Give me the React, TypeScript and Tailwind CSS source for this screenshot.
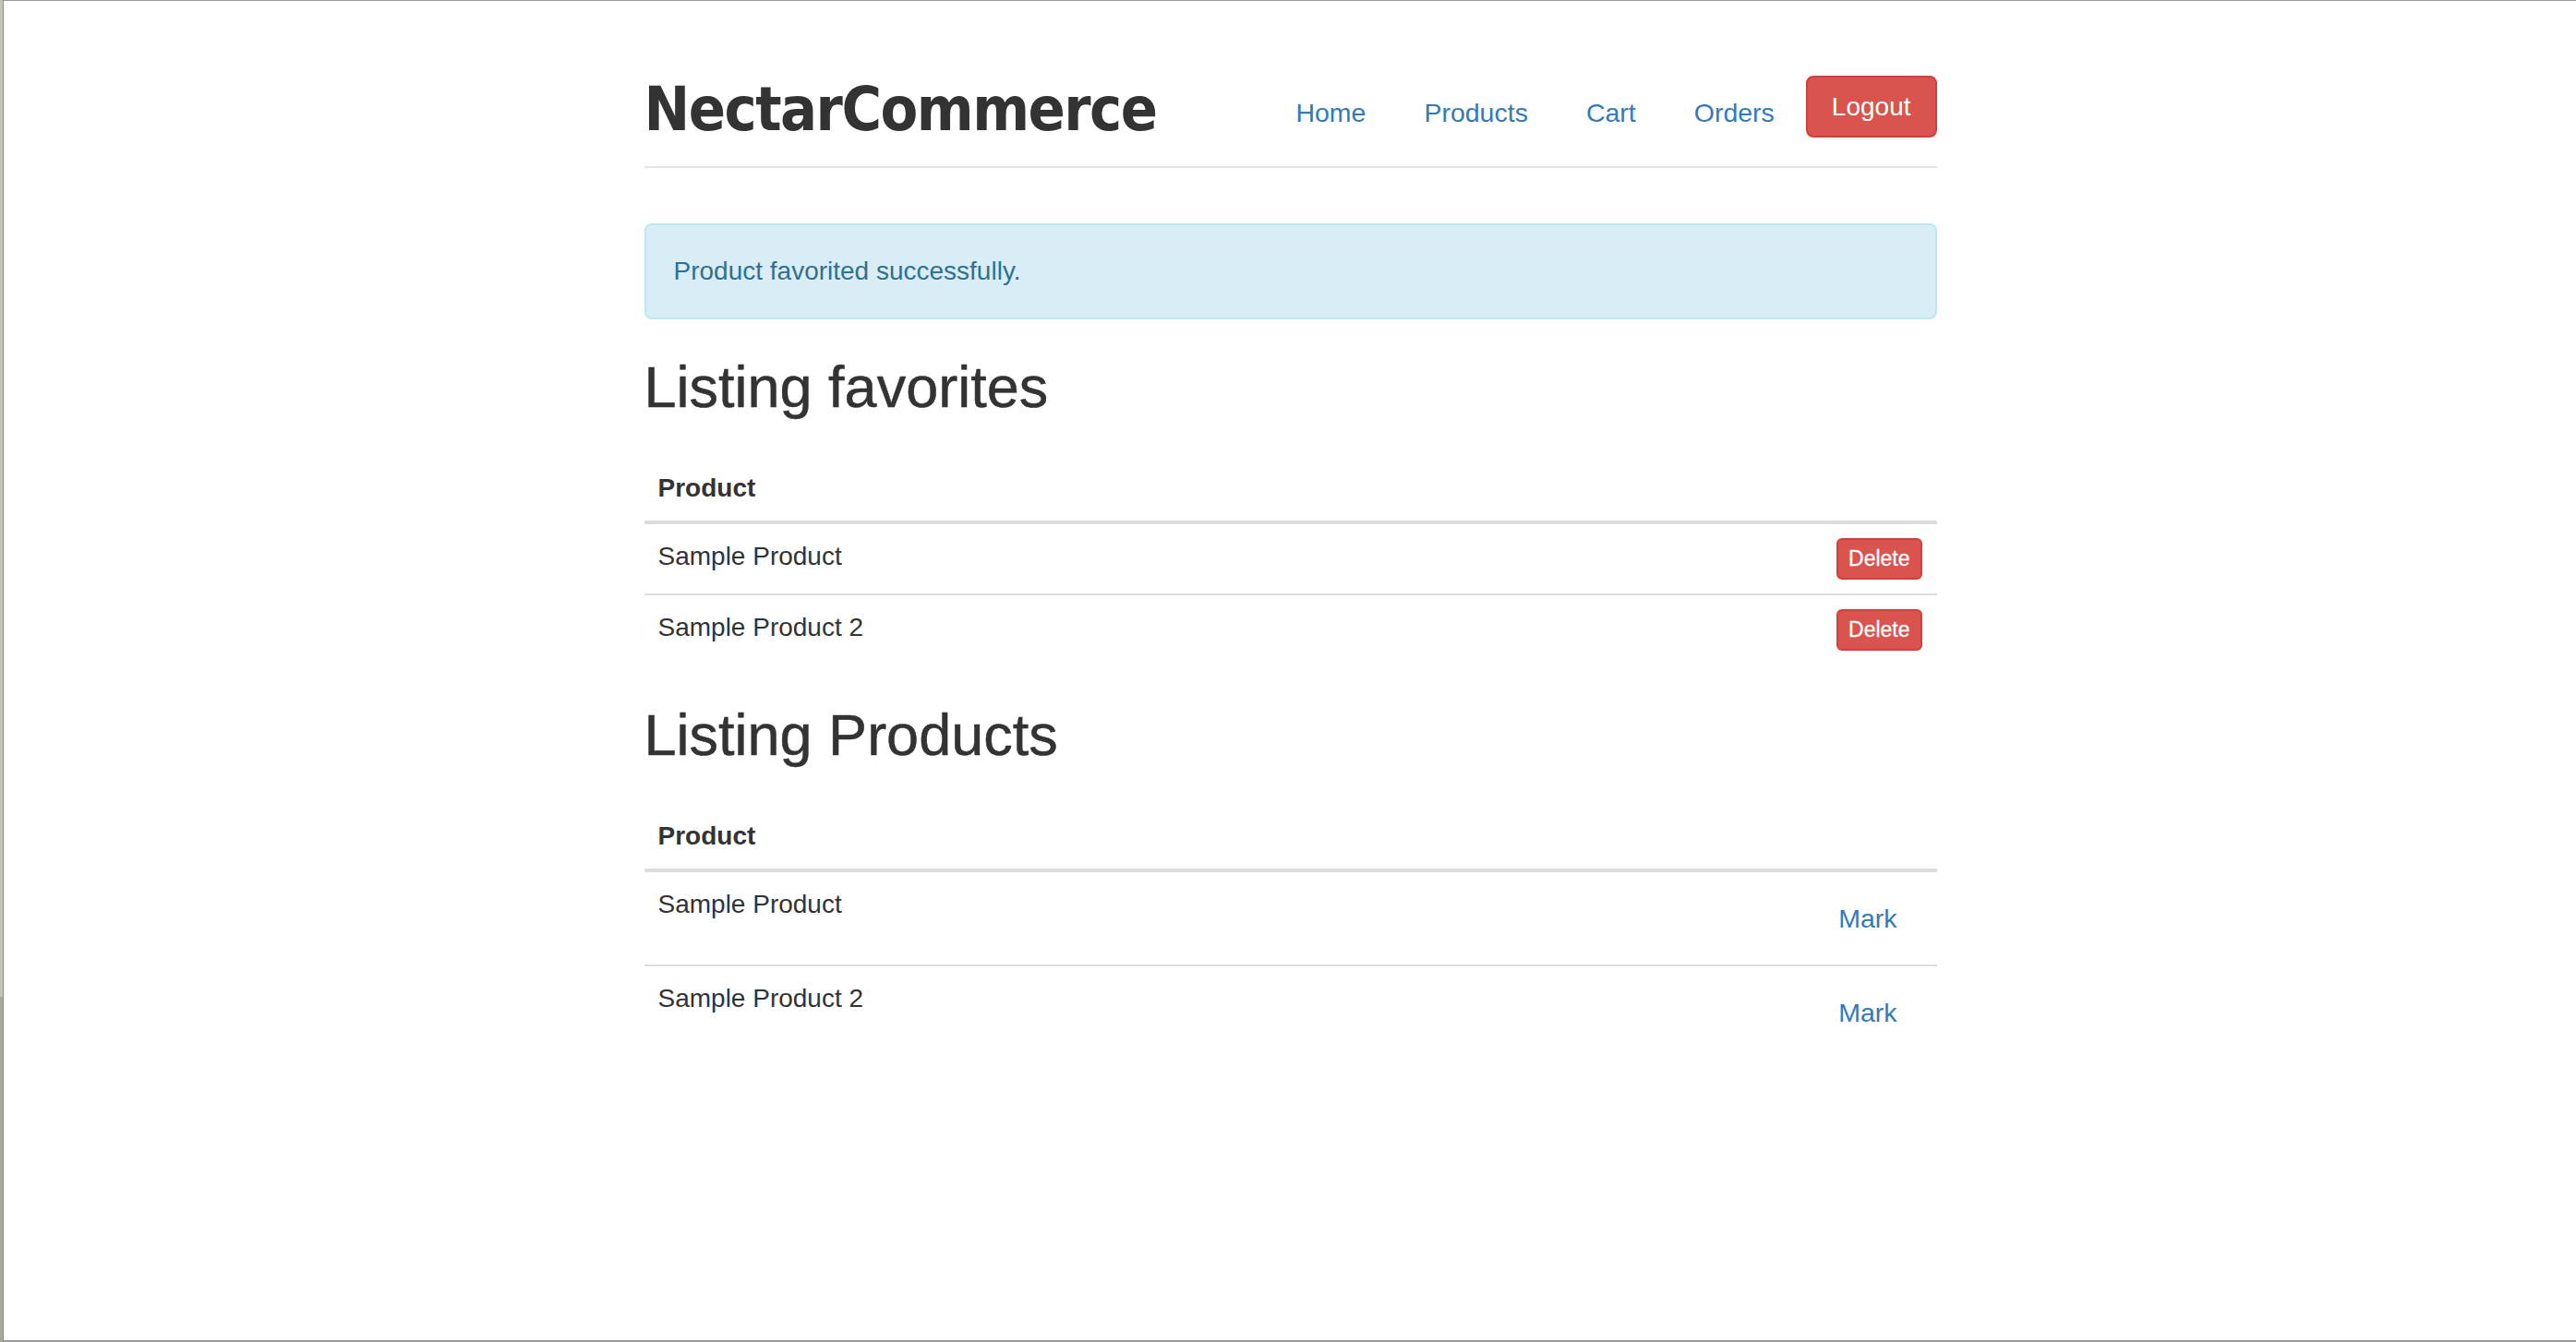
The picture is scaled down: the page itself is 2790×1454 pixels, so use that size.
const NAV = ['Home', 'Products', 'Cart', 'Orders']

const FAVORITES = ['Sample Product', 'Sample Product 2']
const PRODUCTS = ['Sample Product', 'Sample Product 2']

export default function App() {
  return (
    <div className="flex h-[1454px] w-full bg-white font-['Liberation_Sans',Arial,sans-serif] text-[28px] leading-[40px] text-[#333]">
      {/* window edge on the left */}
      <div className="flex w-[4px] shrink-0 flex-col border-r border-[#8a8a86]">
        <div className="h-[1080px] bg-[#c4c4bc]" />
        <div className="flex-1 bg-[#a8a8a0]" />
      </div>

      <main className="flex-1 border-t border-b-2 border-[#9a9a9a] pl-[1px]">
        <div className="mx-auto w-[1400px]">
          {/* Header */}
          <header className="flex items-start justify-between border-b-2 border-[#e5e5e5] pt-[81px] pb-[25px]">
            <div className="font-['DejaVu_Sans_Condensed','DejaVu_Sans',Verdana,sans-serif] text-[66px] leading-[73px] font-bold tracking-[-1.5px] text-[#333]">
              NectarCommerce
            </div>
            <nav className="flex items-start gap-[5px]">
              {NAV.map((n) => (
                <a key={n} href="#" className="mt-[20px] px-[29px] text-[28.5px] leading-[40px] text-[#337ab7]">
                  {n}
                </a>
              ))}
              <button className="rounded-[8px] border-2 border-[#d43f3a] bg-[#d9534f] px-[26px] py-[12px] leading-[39px] text-white">
                Logout
              </button>
            </nav>
          </header>

          {/* Flash */}
          <div className="mt-[60px] rounded-[8px] border-2 border-[#bce8f1] bg-[#d9edf7] px-[30px] py-[30px] text-[#31708f]">
            Product favorited successfully.
          </div>

          {/* Favorites */}
          <h1 className="mt-[38px] mb-[40px] text-[63px] leading-[70px] font-normal text-[#333] [-webkit-text-stroke:0.5px_#333]">
            Listing favorites
          </h1>
          <table className="w-full border-collapse">
            <thead>
              <tr className="border-b-4 border-[#ddd]">
                <th className="p-[15px] text-left font-bold">Product</th>
                <th />
              </tr>
            </thead>
            <tbody className="divide-y-2 divide-[#ddd]">
              {FAVORITES.map((p) => (
                <tr key={p}>
                  <td className="p-[15px] align-top">{p}</td>
                  <td className="p-[15px] pr-[16px] text-right align-top">
                    <button className="rounded-[6px] border-2 border-[#d43f3a] bg-[#d9534f] px-[11px] py-[6px] text-[23px] leading-[29px] text-white [-webkit-text-stroke:0.3px_#fff]">
                      Delete
                    </button>
                  </td>
                </tr>
              ))}
            </tbody>
          </table>

          {/* Products */}
          <h1 className="mt-[41px] mb-[40px] text-[63px] leading-[70px] font-normal text-[#333] [-webkit-text-stroke:0.5px_#333]">
            Listing Products
          </h1>
          <table className="w-full border-collapse">
            <thead>
              <tr className="border-b-4 border-[#ddd]">
                <th className="p-[15px] text-left font-bold">Product</th>
                <th />
              </tr>
            </thead>
            <tbody className="divide-y-2 divide-[#ddd]">
              {PRODUCTS.map((p) => (
                <tr key={p}>
                  <td className="p-[15px] align-top">{p}</td>
                  <td className="p-[15px] text-right align-top">
                    <button className="px-[28px] py-[15px] text-[28.5px] leading-[40px] text-[#337ab7]">Mark</button>
                  </td>
                </tr>
              ))}
            </tbody>
          </table>
        </div>
      </main>
    </div>
  )
}
